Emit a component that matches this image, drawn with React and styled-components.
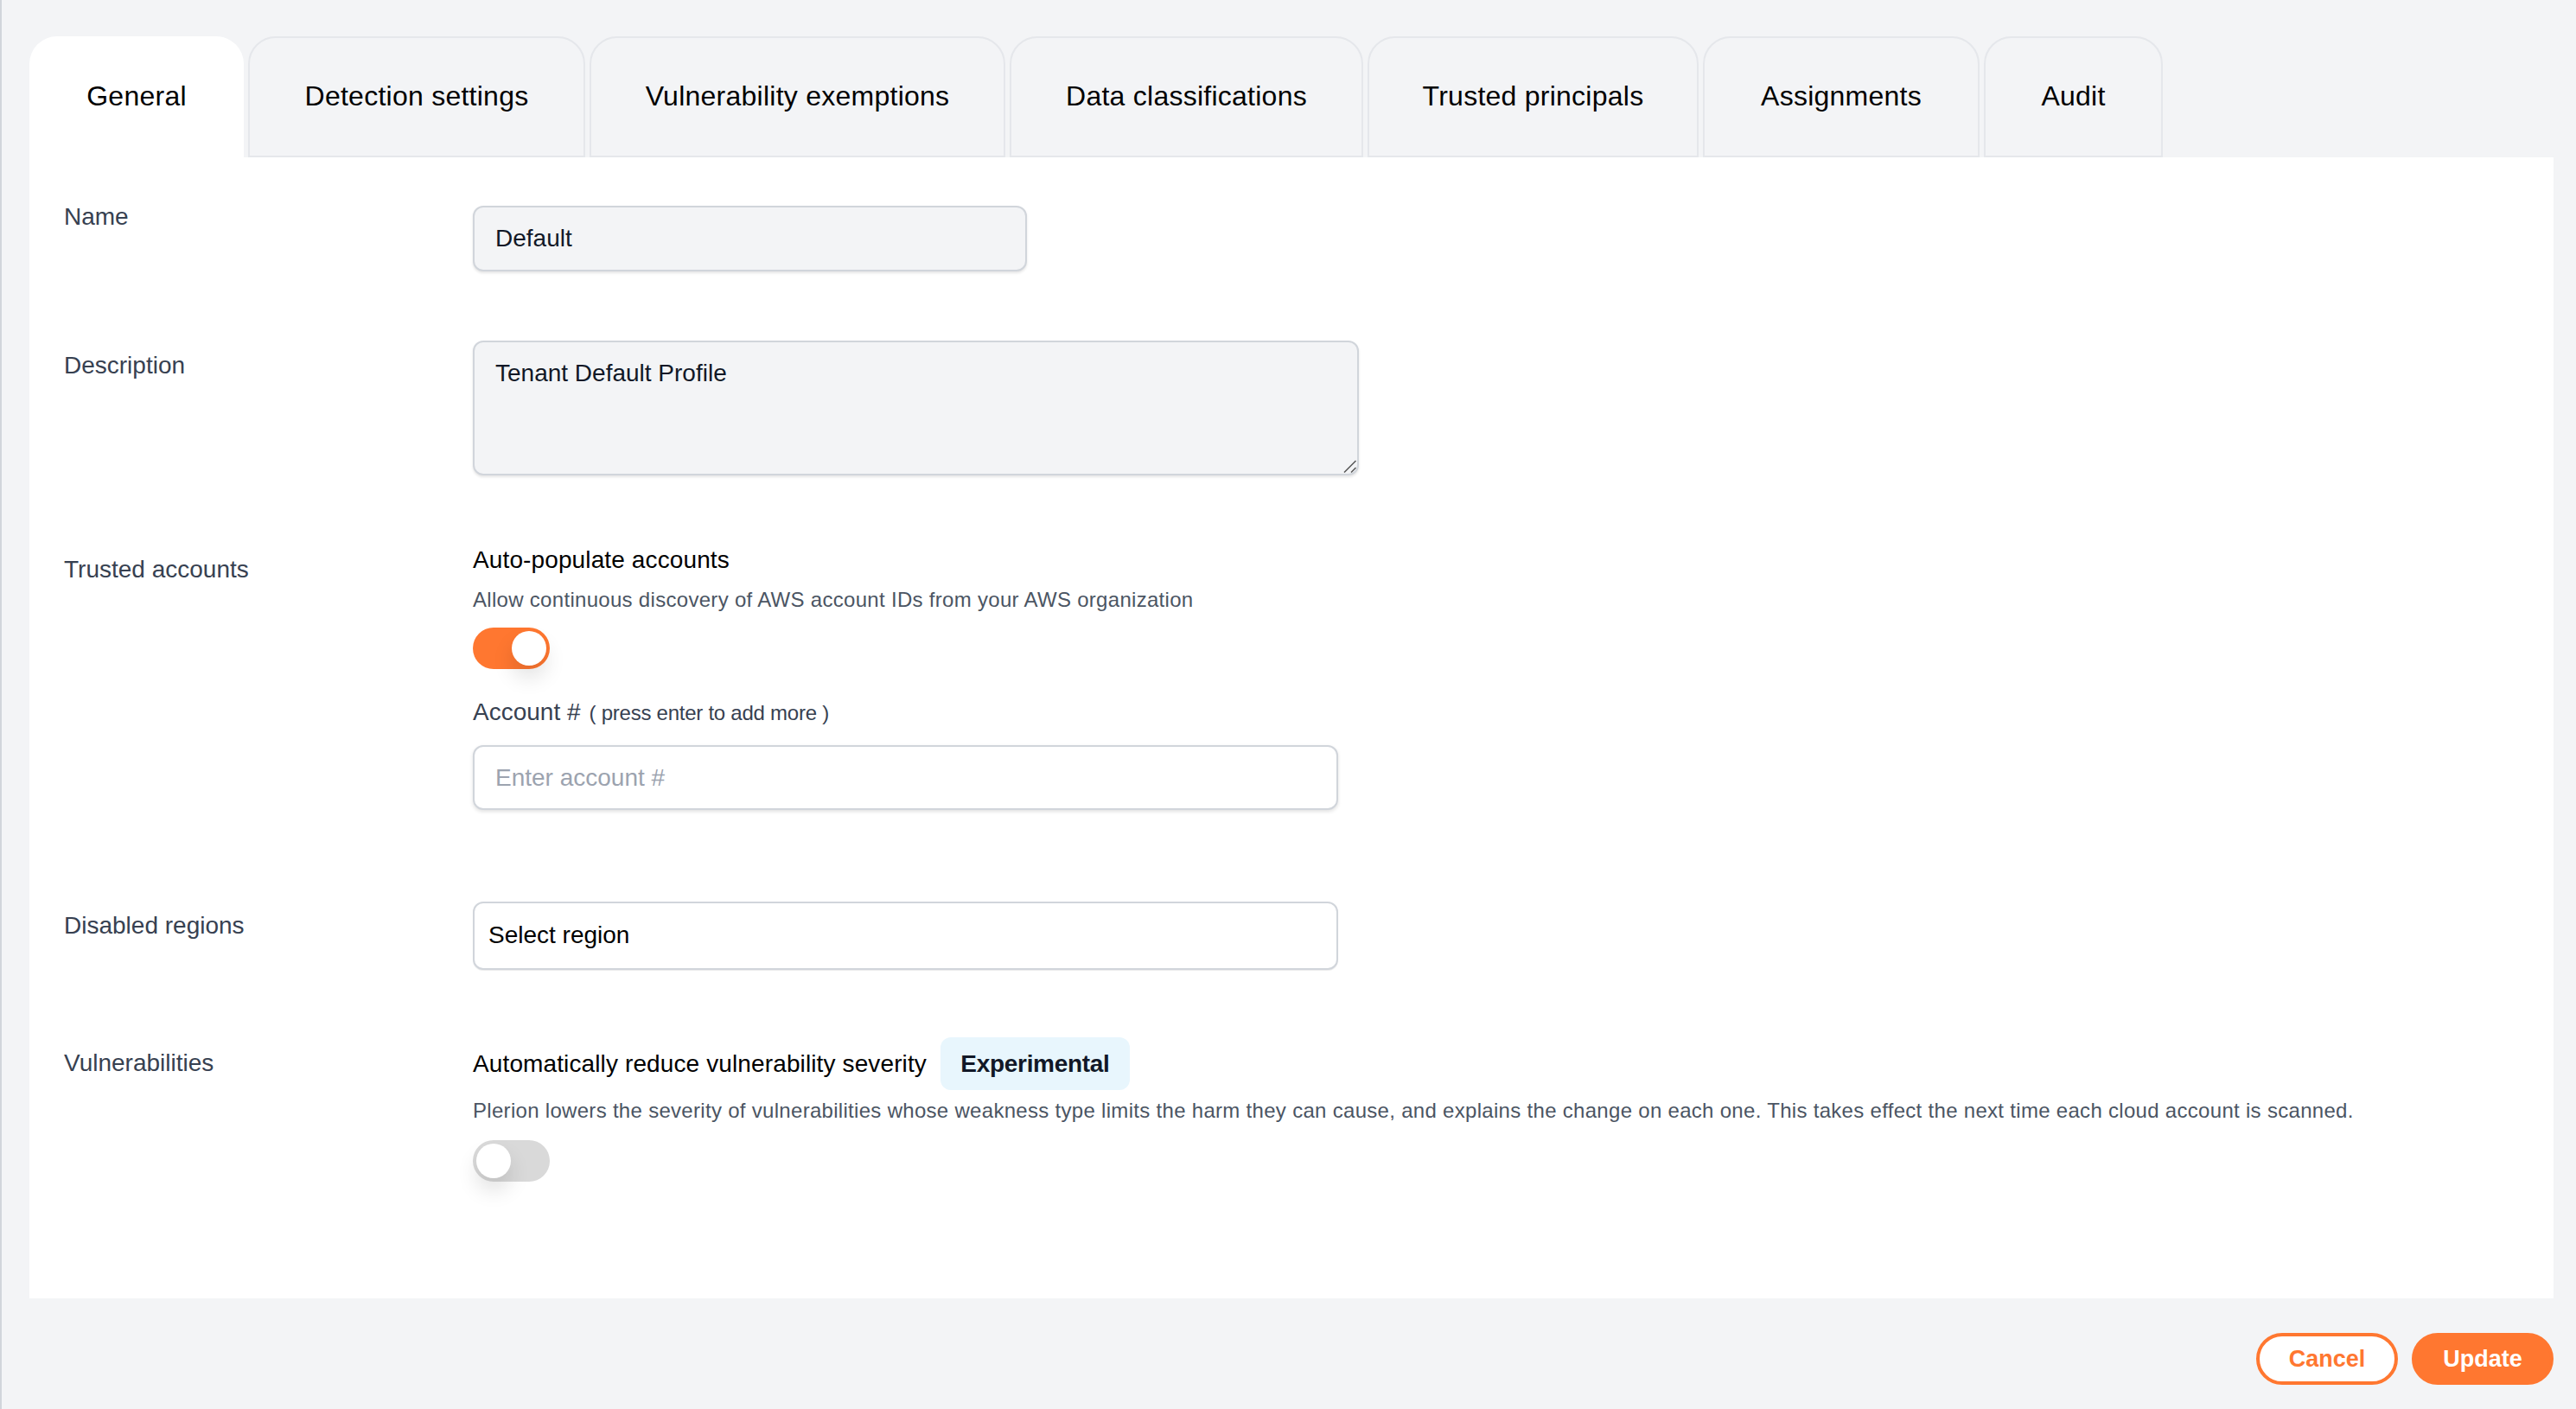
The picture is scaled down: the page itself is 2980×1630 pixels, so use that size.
import React from "react";
import styled, { createGlobalStyle } from "styled-components";

const GlobalStyle = createGlobalStyle`
  html, body {
    margin: 0;
    padding: 0;
    background: #f3f4f6;
  }
  * {
    box-sizing: border-box;
  }
`

const Page = styled.div`
  min-height: 1630px;
  border-left: 2px solid #d1d5db;
  padding: 42px 26px 0 32px;
  background: #f3f4f6;
  font-family: "Liberation Sans", Arial, sans-serif;
  color: #111827;
`

const TabBar = styled.div`
  display: flex;
  gap: 5px;
  height: 140px;
`

const Tab = styled.div`
  display: flex;
  justify-content: center;
  width: ${p => p.$width}px;
  padding-top: ${p => p.$active ? '53px' : '51px'};
  font-size: 32px;
  line-height: 32px;
  letter-spacing: 0.25px;
  white-space: nowrap;
  color: #000;
  border-radius: 32px 32px 0 0;
  background: ${p => p.$active ? '#fff' : '#f3f4f6'};
  border: ${p => p.$active ? 'none' : '2px solid #e5e7eb'};
`

const Panel = styled.div`
  background: #fff;
  height: 1320px;
  padding: 49px 0 0 40px;
`

const Row = styled.div`
  display: grid;
  grid-template-columns: 473px 1fr;
  margin-top: ${p => p.$top || 0}px;
`

const Label = styled.div`
  font-size: 28px;
  line-height: 36px;
  color: #374151;
  padding-top: ${p => p.$top || 0}px;
`

const Field = styled.div`
  padding-top: ${p => p.$top || 0}px;
`

const FilledInput = styled.input`
  display: block;
  width: 641px;
  height: 76px;
  padding: 0 24px;
  border: 2px solid #d1d5db;
  border-radius: 12px;
  background: #f3f4f6;
  box-shadow: 0 2px 3px rgba(0, 0, 0, 0.1);
  font-family: inherit;
  font-size: 28px;
  color: #111827;
  outline: none;
`

const AreaWrap = styled.div`
  position: relative;
  width: 1025px;
  height: 156px;
`

const FilledArea = styled.textarea`
  display: block;
  width: 100%;
  height: 100%;
  padding: 18px 24px;
  border: 2px solid #d1d5db;
  border-radius: 12px;
  background: #f3f4f6;
  box-shadow: 0 2px 3px rgba(0, 0, 0, 0.1);
  font-family: inherit;
  font-size: 28px;
  line-height: 36px;
  color: #111827;
  outline: none;
  resize: none;
`

const Grip = styled.svg`
  position: absolute;
  right: 3px;
  bottom: 3px;
  width: 15px;
  height: 15px;
`

const Heading = styled.div`
  display: flex;
  align-items: center;
  font-size: 28px;
  line-height: 36px;
  letter-spacing: 0.12px;
  color: #000;
`

const Help = styled.div`
  font-size: 24px;
  line-height: 32px;
  letter-spacing: 0.3px;
  color: #4b5563;
  white-space: nowrap;
  margin-top: ${p => p.$top || 0}px;
`

const Toggle = styled.div`
  display: flex;
  justify-content: ${p => p.$on ? 'flex-end' : 'flex-start'};
  width: 89px;
  height: 48px;
  padding: 4px;
  margin-top: ${p => p.$top || 0}px;
  border-radius: 24px;
  background: ${p => p.$on ? '#ff7730' : '#d9d9d9'};
`

const Thumb = styled.span`
  width: 40px;
  height: 40px;
  border-radius: 50%;
  background: #fff;
  box-shadow: 0 14px 24px rgba(0, 0, 0, 0.12);
`

const AccountLabel = styled.div`
  display: flex;
  align-items: baseline;
  gap: 10px;
  margin-top: 32px;
  font-size: 28px;
  line-height: 36px;
  color: #374151;

  & > span {
    font-size: 24px;
    letter-spacing: -0.25px;
  }
`

const AccountInput = styled.input`
  display: block;
  width: 1001px;
  height: 75px;
  margin-top: 19px;
  padding: 0 24px;
  border: 2px solid #d1d5db;
  border-radius: 12px;
  background: #fff;
  box-shadow: 0 2px 4px rgba(0, 0, 0, 0.12);
  font-family: inherit;
  font-size: 28px;
  outline: none;

  &::placeholder {
    color: #9ca3af;
    opacity: 1;
  }
`

const Select = styled.div`
  display: flex;
  align-items: center;
  width: 1001px;
  height: 79px;
  padding: 0 0 2px 16px;
  border: 2px solid #d1d5db;
  border-radius: 12px;
  background: #fff;
  box-shadow: 0 1px 1px rgba(0, 0, 0, 0.08);
  font-size: 28px;
  color: #000;
`

const Badge = styled.span`
  display: inline-flex;
  align-items: center;
  justify-content: center;
  width: 219px;
  height: 61px;
  margin-left: 16px;
  border-radius: 12px;
  background: #e8f6fd;
  font-weight: 700;
  letter-spacing: -0.3px;
  color: #111827;
`

const Footer = styled.div`
  display: flex;
  justify-content: flex-end;
  gap: 16px;
  margin-top: 40px;
`

const Button = styled.button`
  width: 164px;
  height: 60px;
  padding: 0;
  border: 4px solid #ff7730;
  border-radius: 30px;
  background: ${p => p.$primary ? '#ff7730' : '#fff'};
  color: ${p => p.$primary ? '#fff' : '#ff7730'};
  font-family: inherit;
  font-size: 27px;
  font-weight: 700;
`

const tabs = [
  { name: 'General', width: 248 },
  { name: 'Detection settings', width: 390 },
  { name: 'Vulnerability exemptions', width: 481 },
  { name: 'Data classifications', width: 409 },
  { name: 'Trusted principals', width: 383 },
  { name: 'Assignments', width: 320 },
  { name: 'Audit', width: 207 },
]

export default function App() {
  return (
    <Page>
      <GlobalStyle />
      <TabBar>
        {tabs.map((tab, index) => (
          <Tab key={tab.name} $active={index === 0} $width={tab.width}>{tab.name}</Tab>
        ))}
      </TabBar>
      <Panel>
        <Row>
          <Label $top={2}>Name</Label>
          <Field $top={7}>
            <FilledInput readOnly value="Default" />
          </Field>
        </Row>
        <Row $top={80}>
          <Label $top={11}>Description</Label>
          <AreaWrap>
            <FilledArea readOnly value="Tenant Default Profile" />
            <Grip viewBox="0 0 15 15">
              <path d="M1 14.5 L14.5 1 M9 14.5 L14.5 9" stroke="#555" strokeWidth="1.5" fill="none" />
            </Grip>
          </AreaWrap>
        </Row>
        <Row $top={80}>
          <Label $top={11}>Trusted accounts</Label>
          <div>
            <Heading>Auto-populate accounts</Heading>
            <Help $top={12}>Allow continuous discovery of AWS account IDs from your AWS organization</Help>
            <Toggle $on $top={16}><Thumb /></Toggle>
            <AccountLabel>Account # <span>( press enter to add more )</span></AccountLabel>
            <AccountInput placeholder="Enter account #" />
          </div>
        </Row>
        <Row $top={106}>
          <Label $top={10}>Disabled regions</Label>
          <Select>Select region</Select>
        </Row>
        <Row $top={78}>
          <Label $top={12}>Vulnerabilities</Label>
          <div>
            <Heading>
              Automatically reduce vulnerability severity
              <Badge>Experimental</Badge>
            </Heading>
            <Help $top={8}>Plerion lowers the severity of vulnerabilities whose weakness type limits the harm they can cause, and explains the change on each one. This takes effect the next time each cloud account is scanned.</Help>
            <Toggle $top={18}><Thumb /></Toggle>
          </div>
        </Row>
      </Panel>
      <Footer>
        <Button>Cancel</Button>
        <Button $primary>Update</Button>
      </Footer>
    </Page>
  )
}
